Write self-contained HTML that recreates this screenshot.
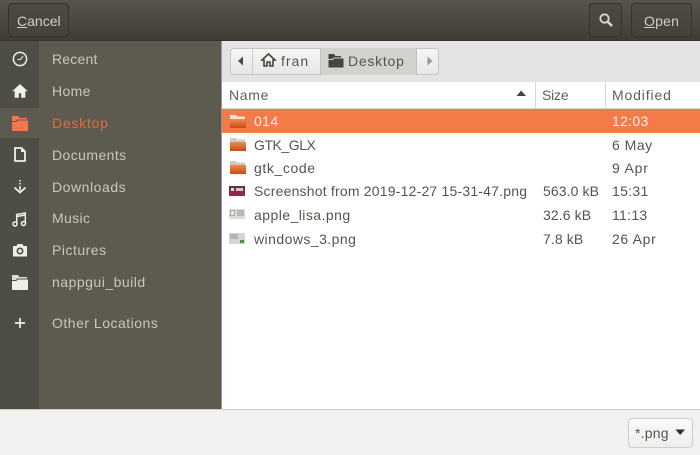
<!DOCTYPE html>
<html><head><meta charset="utf-8"><style>
html,body{margin:0;padding:0;background:#f1f0ee}
#w{width:700px;height:455px;overflow:hidden;position:relative;background:#f1f0ee;font-family:"Liberation Sans",sans-serif;font-size:14px;filter:blur(.3px)}
.a{position:absolute}
.t{position:absolute;white-space:nowrap;line-height:18px;height:18px}
.s{color:#c8c7c0;left:52px}
.f{color:#55554f;left:254px}
.z{color:#55554f;left:543px}
.m{color:#55554f;left:612px}
.btn{position:absolute;top:3px;height:34px;border:1px solid #35332d;border-radius:4px;background:linear-gradient(#4c4a42,#44423b);box-sizing:border-box}
svg{position:absolute;overflow:visible}
</style></head><body><div id="w">
<div class="a" style="left:0;top:0;width:700px;height:41px;background:linear-gradient(#56544b,#3e3c35)"></div>
<div class="a" style="left:0;top:40px;width:700px;height:1px;background:#35332d"></div>
<div class="btn" style="left:8px;width:61px"></div>
<div class="t" style="left:17px;top:12px;color:#cfcec8;letter-spacing:0"><u>C</u>ancel</div>
<div class="btn" style="left:589px;width:33px"></div>
<svg style="left:598px;top:12px" width="18" height="18" viewBox="0 0 18 18"><circle cx="6.5" cy="6.5" r="4.2" fill="none" stroke="#d6d5cf" stroke-width="1.9"/><path d="M9.8 9.8L14 14" stroke="#d6d5cf" stroke-width="2.6"/></svg>
<div class="btn" style="left:631px;width:61px"></div>
<div class="t" style="left:644px;top:12px;color:#cfcec8;letter-spacing:.2px"><u>O</u>pen</div>

<div class="a" style="left:0;top:41px;width:39px;height:368px;background:#4f4e46"></div>
<div class="a" style="left:39px;top:41px;width:182px;height:368px;background:#5d5b4f"></div>
<div class="a" style="left:0;top:108px;width:39px;height:30px;background:#5d5b4f"></div>
<div class="a" style="left:221px;top:41px;width:1px;height:368px;background:#9a9892"></div>

<svg style="left:12px;top:51px" width="16" height="16" viewBox="0 0 16 16"><circle cx="8" cy="8" r="6.6" fill="none" stroke="#eeede9" stroke-width="1.5"/><path d="M5.5 8.5H8.3L11 5.2" fill="none" stroke="#eeede9" stroke-width="1.1"/></svg>
<svg style="left:12px;top:83px" width="16" height="16" viewBox="0 0 16 16"><path d="M8 1.5L1 8H3V14.5H6.5V10H9.5V14.5H13V8H15Z" fill="#f2f1ed" stroke="#f2f1ed" stroke-width=".6"/></svg>
<svg style="left:12px;top:116px" width="16" height="15" viewBox="0 0 16 15"><path d="M0 0H6L7.5 2H15V3.5H5L4 5H0Z" fill="#f0784a"/><path d="M0 6H4.5L5.5 4.5H16V15H0Z" fill="#f0784a"/></svg>
<svg style="left:14px;top:147px" width="12" height="15" viewBox="0 0 12 15"><path d="M1 1H7.5L11 4.5V14H1Z" fill="none" stroke="#f2f1ed" stroke-width="1.8"/><path d="M7 1V5H11Z" fill="#f2f1ed"/></svg>
<svg style="left:13px;top:180px" width="14" height="14" viewBox="0 0 14 14"><path d="M7 0V1.5M7 3V4.5M7 6V10.5" stroke="#eeede9" stroke-width="1.6"/><path d="M1.5 7.5L7 12.5L12.5 7.5" fill="none" stroke="#eeede9" stroke-width="1.8"/></svg>
<svg style="left:12px;top:212px" width="15" height="15" viewBox="0 0 15 15"><path d="M4.7 11V2.5L13.3 1V10.5" fill="none" stroke="#eeede9" stroke-width="1.5"/><path d="M4.7 4.5L13.3 3" stroke="#eeede9" stroke-width="1.5"/><circle cx="3" cy="12" r="2" fill="none" stroke="#eeede9" stroke-width="1.5"/><circle cx="11.5" cy="11.5" r="2" fill="none" stroke="#eeede9" stroke-width="1.5"/></svg>
<svg style="left:13px;top:244px" width="14" height="13" viewBox="0 0 14 13"><path d="M0 2H3.5L4.5 0H9.5L10.5 2H14V12.5H0Z" fill="#eeede9"/><circle cx="7" cy="7" r="2.7" fill="none" stroke="#4f4e46" stroke-width="1.6"/></svg>
<svg style="left:12px;top:275px" width="16" height="15" viewBox="0 0 16 15"><path d="M0 0H6L7.5 2H15V3.5H5L4 5H0Z" fill="#dedcd6"/><path d="M0 6H4.5L5.5 4.5H16V15H0Z" fill="#f0efeb"/></svg>
<svg style="left:14px;top:317px" width="12" height="12" viewBox="0 0 12 12"><path d="M6 1V11M1 6H11" stroke="#eeede9" stroke-width="1.7"/></svg>

<div class="t s" style="top:50px;letter-spacing:.2px">Recent</div>
<div class="t s" style="top:82px;letter-spacing:.35px">Home</div>
<div class="t" style="left:52px;top:114px;color:#e2693f;letter-spacing:.75px">Desktop</div>
<div class="t s" style="top:146px;letter-spacing:.42px">Documents</div>
<div class="t s" style="top:178px;letter-spacing:.55px">Downloads</div>
<div class="t s" style="top:209px;letter-spacing:.35px">Music</div>
<div class="t s" style="top:241px;letter-spacing:.5px">Pictures</div>
<div class="t s" style="top:273px;letter-spacing:.5px">nappgui_build</div>
<div class="t s" style="top:314px;letter-spacing:.5px">Other Locations</div>

<div class="a" style="left:222px;top:41px;width:478px;height:41px;background:#e4e3e1"></div>
<div class="a" style="left:230px;top:48px;width:209px;height:27px;box-sizing:border-box;border:1px solid #c9c7c3;border-radius:4px;background:linear-gradient(#f6f5f4,#e8e7e5)"></div>
<div class="a" style="left:252px;top:49px;width:1px;height:25px;background:#cfcdc9"></div>
<div class="a" style="left:320px;top:48px;width:97px;height:27px;background:#d3d2cf;border:solid #c3c1bd;border-width:0 1px;box-sizing:border-box"></div>
<svg style="left:237px;top:56px" width="8" height="11"><path d="M6 0.5V9.5L1 5Z" fill="#4a4a46"/></svg>
<svg style="left:426px;top:56px" width="8" height="11"><path d="M1.5 0.5V9.5L6.5 5Z" fill="#9a9a96"/></svg>
<svg style="left:261px;top:53px" width="15" height="14" viewBox="0 0 15 14"><path d="M7.5 1L1 7H3V13H6V9H9V13H12V7H14Z" fill="none" stroke="#45453f" stroke-width="1.6"/></svg>
<div class="t" style="left:281px;top:52px;color:#55554f;letter-spacing:1px">fran</div>
<svg style="left:328px;top:53px" width="16" height="15" viewBox="0 0 16 15"><path d="M0.5 1H6L7.5 3H13V4.5H5.5L4.5 6H0.5Z" fill="#45453f"/><path d="M0.5 7H5L6 5.5H15.5V14.5H0.5Z" fill="#45453f"/></svg>
<div class="t" style="left:348px;top:52px;color:#55554f;letter-spacing:.75px">Desktop</div>

<div class="a" style="left:222px;top:82px;width:478px;height:327px;background:#fff"></div>
<div class="a" style="left:222px;top:108px;width:478px;height:1px;background:#d8d7d4"></div>
<div class="a" style="left:535px;top:82px;width:1px;height:26px;background:#d8d7d4"></div>
<div class="a" style="left:605px;top:82px;width:1px;height:26px;background:#d8d7d4"></div>
<div class="t" style="left:229px;top:86px;color:#5f5f5a;letter-spacing:.7px">Name</div>
<svg style="left:516px;top:90px" width="11" height="7"><path d="M0.5 6H10L5.2 0.5Z" fill="#45453f"/></svg>
<div class="t" style="left:542px;top:86px;color:#5f5f5a;letter-spacing:-.2px">Size</div>
<div class="t" style="left:612px;top:86px;color:#5f5f5a;letter-spacing:.85px">Modified</div>

<div class="a" style="left:222px;top:109px;width:478px;height:24px;background:#f37b48"></div>

<svg width="0" height="0" style="position:absolute"><defs><linearGradient id="g" x1="0" y1="0" x2="0" y2="1"><stop offset="0" stop-color="#ee8a52"/><stop offset="1" stop-color="#c94a15"/></linearGradient></defs></svg>
<svg style="left:230px;top:115px" width="16" height="13" viewBox="0 0 16 13"><path d="M0 0H6L7 1.5H15V13H0Z" fill="#f0e6dc"/><path d="M0 4H16V13H0Z" fill="url(#g)"/></svg>
<svg style="left:230px;top:138px" width="16" height="13" viewBox="0 0 16 13"><path d="M0 0H6L7 1.5H15V13H0Z" fill="#cfcbc3"/><path d="M0 4H16V13H0Z" fill="url(#g)"/></svg>
<svg style="left:230px;top:161px" width="16" height="13" viewBox="0 0 16 13"><path d="M0 0H6L7 1.5H15V13H0Z" fill="#cfcbc3"/><path d="M0 4H16V13H0Z" fill="url(#g)"/></svg>
<svg style="left:229px;top:185px" width="16" height="12" viewBox="0 0 16 12"><rect y="1" width="16" height="10" fill="#8e2b44"/><rect y="1" width="16" height="3" fill="#5c3a3a"/><rect x="2" y="3" width="3" height="3" fill="#e8dcd8"/><rect x="7" y="3" width="7" height="3" fill="#d8c8c8"/></svg>
<svg style="left:229px;top:208px" width="16" height="12" viewBox="0 0 16 12"><rect y="1" width="16" height="10" fill="#dcdcd8"/><rect x="1" y="2" width="5" height="6" fill="#a8a8a4"/><rect x="8" y="2" width="7" height="6" fill="#b8b8b4"/><rect x="2" y="3" width="3" height="4" fill="#e8e8e4"/></svg>
<svg style="left:229px;top:232px" width="16" height="13" viewBox="0 0 16 13"><rect y="1" width="16" height="11" fill="#d4d6d2"/><rect x="1" y="2" width="8" height="5" fill="#b2b4b0"/><rect x="11" y="8" width="4" height="3" fill="#4f8f4a"/></svg>

<div class="t" style="left:254px;top:112px;color:#fdeee6;letter-spacing:.4px">014</div>
<div class="t" style="left:612px;top:112px;color:#fdeee6;letter-spacing:.3px">12:03</div>
<div class="t f" style="top:136px;letter-spacing:-.45px">GTK_GLX</div>
<div class="t m" style="top:136px;letter-spacing:.5px">6 May</div>
<div class="t f" style="top:159px;letter-spacing:.6px">gtk_code</div>
<div class="t m" style="top:159px;letter-spacing:.8px">9 Apr</div>
<div class="t f" style="top:182px;letter-spacing:.2px">Screenshot from 2019-12-27 15-31-47.png</div>
<div class="t z" style="top:182px;letter-spacing:.1px">563.0 kB</div>
<div class="t m" style="top:182px;letter-spacing:.3px">15:31</div>
<div class="t f" style="top:206px;letter-spacing:.45px">apple_lisa.png</div>
<div class="t z" style="top:206px;letter-spacing:.1px">32.6 kB</div>
<div class="t m" style="top:206px;letter-spacing:.3px">11:13</div>
<div class="t f" style="top:230px;letter-spacing:.45px">windows_3.png</div>
<div class="t z" style="top:230px;letter-spacing:.1px">7.8 kB</div>
<div class="t m" style="top:230px;letter-spacing:.65px">26 Apr</div>

<div class="a" style="left:0;top:409px;width:700px;height:1px;background:#cfcdc9"></div>
<div class="a" style="left:0;top:410px;width:700px;height:45px;background:#f2f1ef"></div>
<div class="a" style="left:628px;top:418px;width:65px;height:30px;box-sizing:border-box;border:1px solid #cfcdc9;border-radius:4px;background:linear-gradient(#fafaf9,#eeedeb)"></div>
<div class="t" style="left:635px;top:424px;color:#55554f;letter-spacing:.2px">*.png</div>
<svg style="left:675px;top:429px" width="11" height="7"><path d="M0.5 0.5H10L5.2 6Z" fill="#2f2f2c"/></svg>
</div></body></html>
